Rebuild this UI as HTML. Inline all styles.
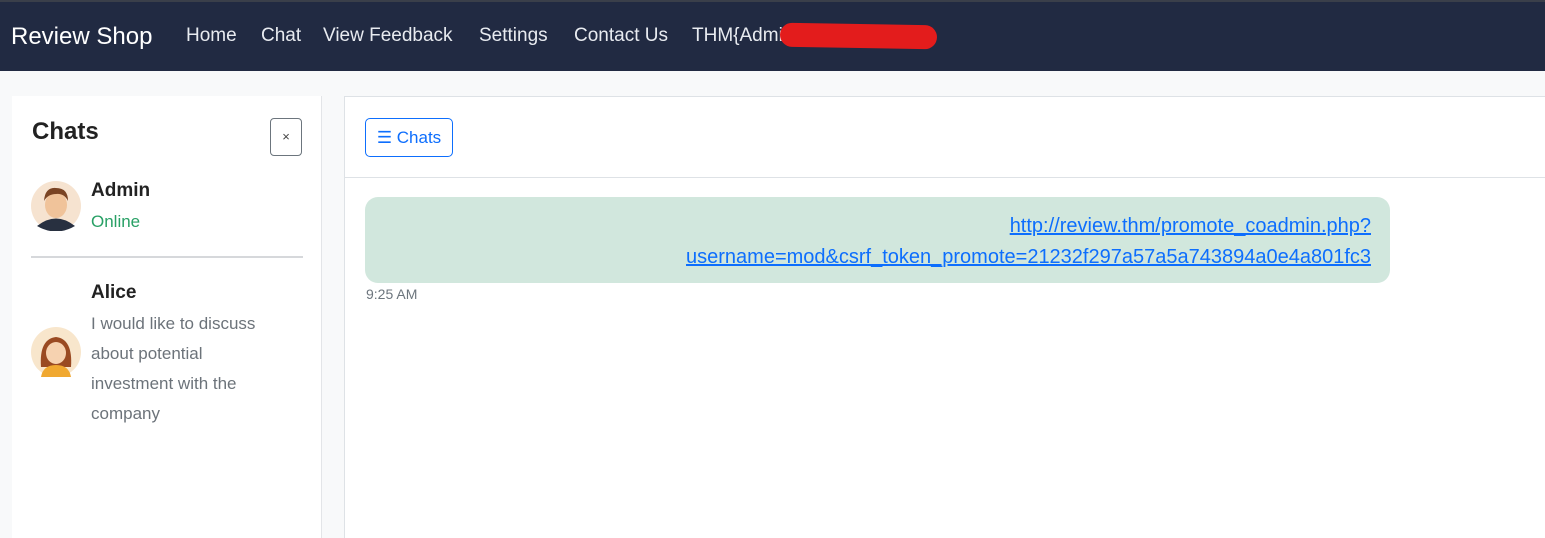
<!DOCTYPE html>
<html><head><style>
*{margin:0;padding:0;box-sizing:border-box}
body{width:1545px;height:538px;overflow:hidden;background:#f8f9fa;font-family:"Liberation Sans",sans-serif;position:relative}
.nav{position:absolute;left:0;top:0;width:1545px;height:71px;background:#212a42;border-top:2px solid #3a3f4a}
.nav span{position:absolute;top:23px;color:#e8ebf0;font-size:19px;white-space:nowrap}
.brand{font-size:24px!important;left:11px;top:21px!important;color:#fff!important}
.blot{position:absolute;left:780px;top:22px;width:157px;height:24px;background:#e31c1c;border-radius:12px;transform:rotate(1deg)}
.side{position:absolute;left:12px;top:96px;width:310px;height:442px;background:#fff;border-right:1px solid #e3e5e8}
.main{position:absolute;left:344px;top:96px;width:1201px;height:442px;background:#fff;border-left:1px solid #dee2e6;border-top:1px solid #dee2e6}
.abs{position:absolute;white-space:nowrap}
</style></head><body>
<div class="nav">
<span class="brand">Review Shop</span>
<span style="left:186px">Home</span>
<span style="left:261px">Chat</span>
<span style="left:323px">View Feedback</span>
<span style="left:479px">Settings</span>
<span style="left:574px">Contact Us</span>
<span style="left:692px">THM{Admin</span>
<div class="blot"></div>
</div>
<div class="side">
<div class="abs" style="left:20px;top:22px;font-size:24px;font-weight:bold;color:#222">Chats</div>
<div class="abs" style="left:258px;top:22px;width:32px;height:38px;border:1px solid #6c757d;border-radius:4px;text-align:center;line-height:36px;font-size:13px;color:#444">×</div>
<svg class="abs" style="left:19px;top:85px" width="50" height="50"><circle cx="25" cy="25" r="25" fill="#f6e3d0"/><path d="M6 45 Q25 30 44 45 Q25 56 6 45Z" fill="#283040"/><ellipse cx="25" cy="24" rx="11" ry="13" fill="#f0c39a"/><path d="M13 20 Q14 6 25 7 Q37 7 37 20 Q33 12 25 13 Q17 13 13 20Z" fill="#7a4424"/></svg>
<div class="abs" style="left:79px;top:84px;font-size:19px;font-weight:bold;color:#222">Admin</div>
<div class="abs" style="left:79px;top:116px;font-size:17px;color:#28a065">Online</div>
<div class="abs" style="left:19px;top:160px;width:272px;height:2px;background:#d6d8db"></div>
<svg class="abs" style="left:19px;top:231px" width="50" height="50"><circle cx="25" cy="25" r="25" fill="#f8e6cc"/><path d="M10 40 Q8 12 25 10 Q42 12 40 40Z" fill="#9a4a22"/><path d="M10 50 Q12 38 25 38 Q38 38 40 50Z" fill="#f0a830"/><ellipse cx="25" cy="26" rx="10" ry="11" fill="#f6d2b0"/></svg>
<div class="abs" style="left:79px;top:186px;font-size:19px;font-weight:bold;color:#222">Alice</div>
<div class="abs" style="left:79px;top:213px;font-size:17px;color:#6c737a;line-height:30px;white-space:normal;width:180px">I would like to discuss about potential investment with the company</div>
</div>
<div class="main">
<div class="abs" style="left:20px;top:21px;width:88px;height:39px;border:1px solid #0d6efd;border-radius:5px;color:#0d6efd;font-size:17px;line-height:37px;text-align:center">☰ Chats</div>
<div class="abs" style="left:0;top:80px;width:1201px;height:1px;background:#dee2e6"></div>
<div class="abs" style="left:20px;top:100px;width:1025px;height:86px;background:#d1e7dd;border-radius:13px"></div>
<div class="abs" style="right:174px;top:114px;text-align:right;font-size:20px;line-height:31px;color:#0d6efd;text-decoration:underline">http://review.thm/promote_coadmin.php?<br>username=mod&amp;csrf_token_promote=21232f297a57a5a743894a0e4a801fc3</div>
<div class="abs" style="left:21px;top:189px;font-size:14px;color:#6c757d">9:25 AM</div>
</div>
</body></html>
